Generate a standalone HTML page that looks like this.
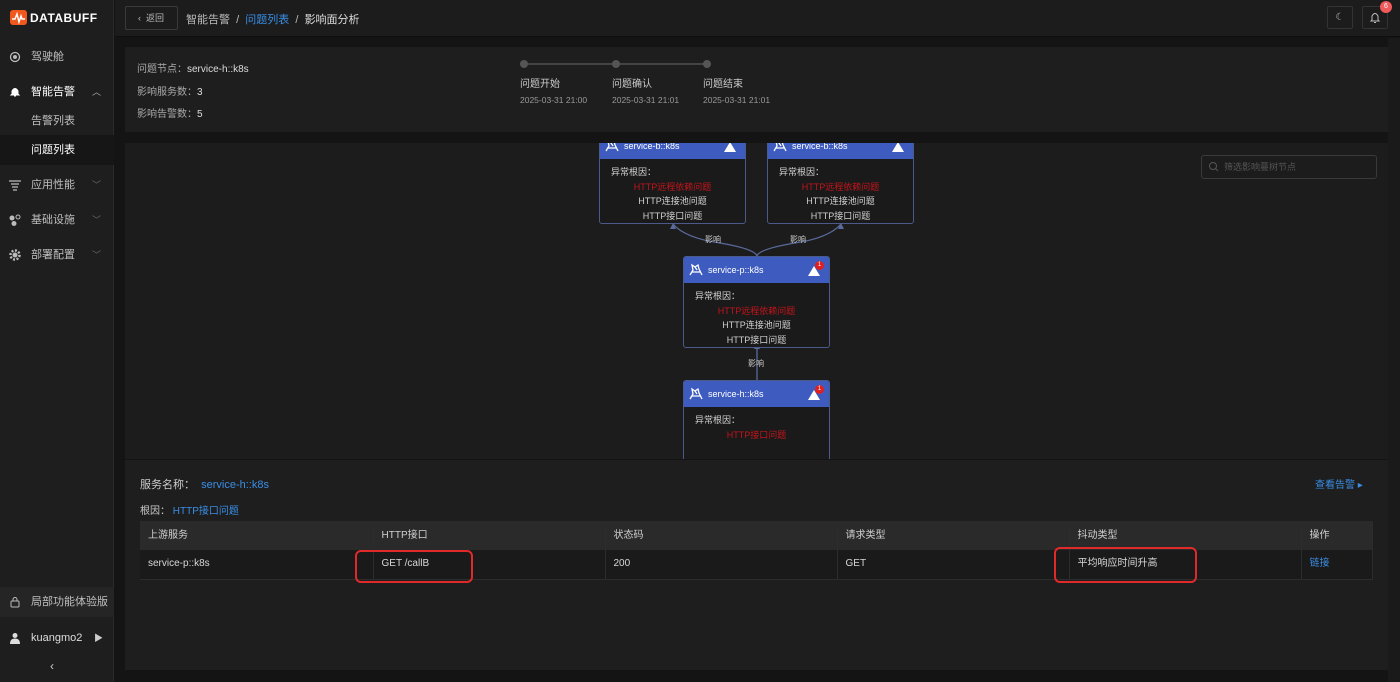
<!DOCTYPE html><html><head><meta charset="utf-8"><style>
*{box-sizing:border-box;margin:0;padding:0}
body{width:1400px;height:682px;background:#141414;font-family:"Liberation Sans","Noto Sans CJK SC",sans-serif;color:#d0d0d0;font-size:11px;position:relative;overflow:hidden}
.abs{position:absolute}
.side{left:0;top:0;width:114px;height:682px;background:#1e1e1e;border-right:1px solid #2a2a2a}
.mi{position:absolute;left:0;width:114px;height:30px;line-height:30px;font-size:11px;color:#bfbfbf}
.mi .t{position:absolute;left:31px}
.mi .ic{position:absolute;left:9px;top:9px;width:12px;height:12px}
.mi .ar{position:absolute;left:92px;color:#666;font-size:9px}
.top{left:115px;top:0;right:0;height:37px;background:#1c1c1c;border-bottom:1px solid #0e0e0e}
.panel{background:#1e1e1e}
.node{position:absolute;width:147px;border:1px solid #4a5a8a;border-radius:3px;background:#1a1a1a;overflow:hidden}
.nh{background:#3e5cc0;height:26px;color:#fff;font-size:9px;line-height:26px;padding-left:24px;position:relative}
.nh svg{position:absolute;left:5px;top:6px}
.nb{font-size:9px;text-align:center;line-height:14.5px;padding-top:6px}
.nb .l{text-align:left;padding-left:11px}
.red{color:#c4141a}
.tri{position:absolute;right:9px;top:9px;width:0;height:0;border-left:6px solid transparent;border-right:6px solid transparent;border-bottom:10px solid #fff}
.bd{position:absolute;right:5px;top:4px;width:9px;height:9px;border-radius:50%;background:#e02020;color:#fff;font-size:6px;line-height:9px;text-align:center}
table{border-collapse:collapse;width:1233px;table-layout:fixed}
td,th{height:29px;font-size:10px;font-weight:normal;text-align:left;padding:0 0 0 8px;border-right:1px solid #2c2c2c;line-height:14px;vertical-align:middle;overflow:hidden;white-space:nowrap}
th{background:#2a2a2a;color:#d0d0d0}
td{background:#1a1a1a;color:#d8d8d8;border-bottom:1px solid #2c2c2c}
</style></head><body>
<div class="abs side">
 <div class="abs" style="left:10px;top:10px;width:17px;height:15px;background:#f0581e;border-radius:3px"></div>
 <svg class="abs" style="left:10px;top:10px" width="17" height="15"><path d="M2 9 L5 9 L7 4 L9 12 L11 6 L12 9 L15 9" stroke="#fff" stroke-width="1.5" fill="none"/></svg>
 <div class="abs" style="left:30px;top:11px;font-size:12px;font-weight:bold;color:#fff;letter-spacing:0.5px">DATABUFF</div>
 <div class="mi" style="top:42px"><svg class="ic" viewBox="0 0 12 12"><circle cx="6" cy="6" r="4.5" stroke="#bbb" fill="none" stroke-width="1.3"/><circle cx="6" cy="6" r="2" fill="#bbb"/></svg><span class="t">驾驶舱</span></div>
 <div class="mi" style="top:77px;color:#fff"><svg class="ic" viewBox="0 0 12 12"><path d="M2 9 L3 8 L3 5 Q6 0 9 5 L9 8 L10 9 Z M5 10 L7 10" fill="#fff" stroke="#fff"/></svg><span class="t">智能告警</span><span class="ar" style="color:#aaa">︿</span></div>
 <div class="mi" style="top:106px"><span class="t">告警列表</span></div>
 <div class="mi" style="top:135px;background:#161616;color:#fff"><span class="t">问题列表</span></div>
 <div class="mi" style="top:170px"><svg class="ic" viewBox="0 0 12 12"><path d="M0 2H12M2 5H10M3 8H9M4 11H8" stroke="#bbb" stroke-width="1.2"/></svg><span class="t">应用性能</span><span class="ar">﹀</span></div>
 <div class="mi" style="top:205px"><svg class="ic" viewBox="0 0 12 12"><circle cx="3" cy="4" r="2.5" fill="#bbb"/><circle cx="9" cy="3" r="2" fill="none" stroke="#bbb"/><circle cx="5" cy="9.5" r="2.5" fill="#bbb"/></svg><span class="t">基础设施</span><span class="ar">﹀</span></div>
 <div class="mi" style="top:240px"><svg class="ic" viewBox="0 0 12 12"><circle cx="6" cy="6" r="4.5" fill="none" stroke="#bbb" stroke-width="2.5" stroke-dasharray="2 1.5"/><circle cx="6" cy="6" r="2.5" fill="#bbb"/></svg><span class="t">部署配置</span><span class="ar">﹀</span></div>
 <div class="mi" style="top:587px;background:#252525"><svg class="ic" viewBox="0 0 12 12"><rect x="2" y="5" width="8" height="6" rx="1" fill="none" stroke="#bbb"/><path d="M4 5V3.5a2 2 0 0 1 4 0V5" fill="none" stroke="#bbb"/></svg><span class="t">局部功能体验版</span></div>
 <div class="mi" style="top:623px;color:#ddd"><svg class="ic" viewBox="0 0 12 12"><circle cx="6" cy="3.5" r="2.5" fill="#ddd"/><path d="M1 12Q1 6.5 6 6.5Q11 6.5 11 12Z" fill="#ddd"/></svg><span class="t">kuangmo2</span><span class="ar" style="left:94px;color:#ccc">▶</span></div>
 <div class="abs" style="left:50px;top:659px;color:#ccc;font-size:12px">‹</div>
</div>
<div class="abs top">
 <div class="abs" style="left:10px;top:6px;width:53px;height:24px;border:1px solid #3a3a3a;border-radius:2px;font-size:9px;color:#bbb;line-height:22px;padding-left:12px">‹&nbsp; 返回</div>
 <div class="abs" style="left:71px;top:11px;font-size:11px;color:#bbb">智能告警 &nbsp;/&nbsp; <span style="color:#3a8ee6">问题列表</span> &nbsp;/&nbsp; <span style="color:#ddd">影响面分析</span></div>
 <div class="abs" style="left:1212px;top:6px;width:26px;height:23px;border:1px solid #333;border-radius:2px;color:#bbb;text-align:center;line-height:21px;font-size:10px">☾</div>
 <div class="abs" style="left:1247px;top:6px;width:26px;height:23px;border:1px solid #333;border-radius:2px"><svg width="24" height="21"><path d="M8 14 L9 13 L9 9 Q12 4 15 9 L15 13 L16 14 Z M11 15.5 L13 15.5" fill="none" stroke="#bbb"/></svg></div>
 <div class="abs" style="left:1265px;top:1px;width:12px;height:12px;border-radius:50%;background:#f05a5a;color:#fff;font-size:7px;text-align:center;line-height:12px">6</div>
</div>
<div class="abs" style="left:1388px;top:38px;width:12px;height:644px;background:#1a1a1a"></div>
<div class="abs panel" style="left:125px;top:47px;width:1263px;height:85px">
 <div class="abs" style="left:12px;top:12px;line-height:22.5px;font-size:10px;color:#aaa">问题节点：<span style="color:#ddd">service-h::k8s</span><br>影响服务数：<span style="color:#ddd">3</span><br>影响告警数：<span style="color:#ddd">5</span></div>
 <div class="abs" style="left:400px;top:16px;width:183px;height:2px;background:#444"></div>
 <div class="abs" style="left:395px;top:13px;width:8px;height:8px;border-radius:50%;background:#555"></div>
 <div class="abs" style="left:487px;top:13px;width:8px;height:8px;border-radius:50%;background:#555"></div>
 <div class="abs" style="left:578px;top:13px;width:8px;height:8px;border-radius:50%;background:#555"></div>
 <div class="abs" style="left:395px;top:28px;font-size:10px;color:#ccc">问题开始<div style="font-size:8.5px;color:#999;margin-top:5px">2025-03-31 21:00</div></div>
 <div class="abs" style="left:487px;top:28px;font-size:10px;color:#ccc">问题确认<div style="font-size:8.5px;color:#999;margin-top:5px">2025-03-31 21:01</div></div>
 <div class="abs" style="left:578px;top:28px;font-size:10px;color:#ccc">问题结束<div style="font-size:8.5px;color:#999;margin-top:5px">2025-03-31 21:01</div></div>
</div>
<div class="abs" style="left:125px;top:143px;width:1263px;height:316px;background:#1c1c1c;overflow:hidden">
 <div class="abs" style="left:1076px;top:12px;width:176px;height:24px;border:1px solid #3a3a3a;border-radius:3px;font-size:9px;color:#555;line-height:22px;padding-left:22px">筛选影响蔓树节点</div>
 <svg class="abs" style="left:1083px;top:18px" width="12" height="12"><circle cx="5" cy="5" r="3.5" stroke="#555" fill="none"/><path d="M7.5 7.5L10 10" stroke="#555"/></svg>
 <svg class="abs" style="left:0;top:0" width="1263" height="316"><path d="M548 81 Q560 95 595 100 Q630 106 632 113 M716 81 Q704 95 670 100 Q634 106 632 113 M632 237 L632 200" stroke="#5a6a9a" stroke-width="1.3" fill="none"/><path d="M545 86L548 80L551 86ZM713 86L716 80L719 86ZM629 206L632 200L635 206Z" fill="#5a6a9a"/></svg>
 <div class="abs" style="left:580px;top:91px;font-size:8px;color:#ccc">影响</div>
 <div class="abs" style="left:665px;top:91px;font-size:8px;color:#ccc">影响</div>
 <div class="abs" style="left:623px;top:215px;font-size:8px;color:#ccc">影响</div>
 <div class="node" style="left:474px;top:-11px;height:92px"><div class="nh"><svg width="14" height="13" viewBox="0 0 14 13"><path d="M1 12 L4 7 L3 2 L6 4 L9 2 L10 6 L13 12 M3 9 L11 9 M6 4 L8 7" stroke="#fff" stroke-width="1.3" fill="none"/></svg>service-b::k8s<span class="tri"></span></div><div class="nb"><div class="l">异常根因：</div><div class="red">HTTP远程依赖问题</div><div>HTTP连接池问题</div><div>HTTP接口问题</div></div></div>
 <div class="node" style="left:642px;top:-11px;height:92px"><div class="nh"><svg width="14" height="13" viewBox="0 0 14 13"><path d="M1 12 L4 7 L3 2 L6 4 L9 2 L10 6 L13 12 M3 9 L11 9 M6 4 L8 7" stroke="#fff" stroke-width="1.3" fill="none"/></svg>service-b::k8s<span class="tri"></span></div><div class="nb"><div class="l">异常根因：</div><div class="red">HTTP远程依赖问题</div><div>HTTP连接池问题</div><div>HTTP接口问题</div></div></div>
 <div class="node" style="left:558px;top:113px;height:92px"><div class="nh"><svg width="14" height="13" viewBox="0 0 14 13"><path d="M1 12 L4 7 L3 2 L6 4 L9 2 L10 6 L13 12 M3 9 L11 9 M6 4 L8 7" stroke="#fff" stroke-width="1.3" fill="none"/></svg>service-p::k8s<span class="tri"></span><span class="bd">1</span></div><div class="nb"><div class="l">异常根因：</div><div class="red">HTTP远程依赖问题</div><div>HTTP连接池问题</div><div>HTTP接口问题</div></div></div>
 <div class="node" style="left:558px;top:237px;height:92px"><div class="nh"><svg width="14" height="13" viewBox="0 0 14 13"><path d="M1 12 L4 7 L3 2 L6 4 L9 2 L10 6 L13 12 M3 9 L11 9 M6 4 L8 7" stroke="#fff" stroke-width="1.3" fill="none"/></svg>service-h::k8s<span class="tri"></span><span class="bd">1</span></div><div class="nb"><div class="l">异常根因：</div><div class="red">HTTP接口问题</div></div></div>
</div>
<div class="abs panel" style="left:125px;top:460px;width:1263px;height:210px">
 <div class="abs" style="left:15px;top:16px;font-size:11px;color:#ccc">服务名称： <span style="color:#3a8ee6">&nbsp;service-h::k8s</span></div>
 <div class="abs" style="left:1190px;top:16px;font-size:10px;color:#3a8ee6">查看告警 ▸</div>
 <div class="abs" style="left:15px;top:42px;font-size:10px;color:#ccc">根因： <span style="color:#3a8ee6">HTTP接口问题</span></div>
 <div class="abs" style="left:15px;top:61px"><table><tr><th style="width:233px">上游服务</th><th style="width:232px">HTTP接口</th><th style="width:232px">状态码</th><th style="width:232px">请求类型</th><th style="width:232px">抖动类型</th><th>操作</th></tr><tr><td>service-p::k8s</td><td>GET /callB</td><td>200</td><td>GET</td><td>平均响应时间升高</td><td style="color:#3a8ee6">链接</td></tr></table></div>
</div>
<div class="abs" style="left:355px;top:550px;width:118px;height:33px;border:2px solid #e02a2a;border-radius:6px"></div>
<div class="abs" style="left:1054px;top:547px;width:143px;height:36px;border:2px solid #e02a2a;border-radius:6px"></div>
</body></html>
